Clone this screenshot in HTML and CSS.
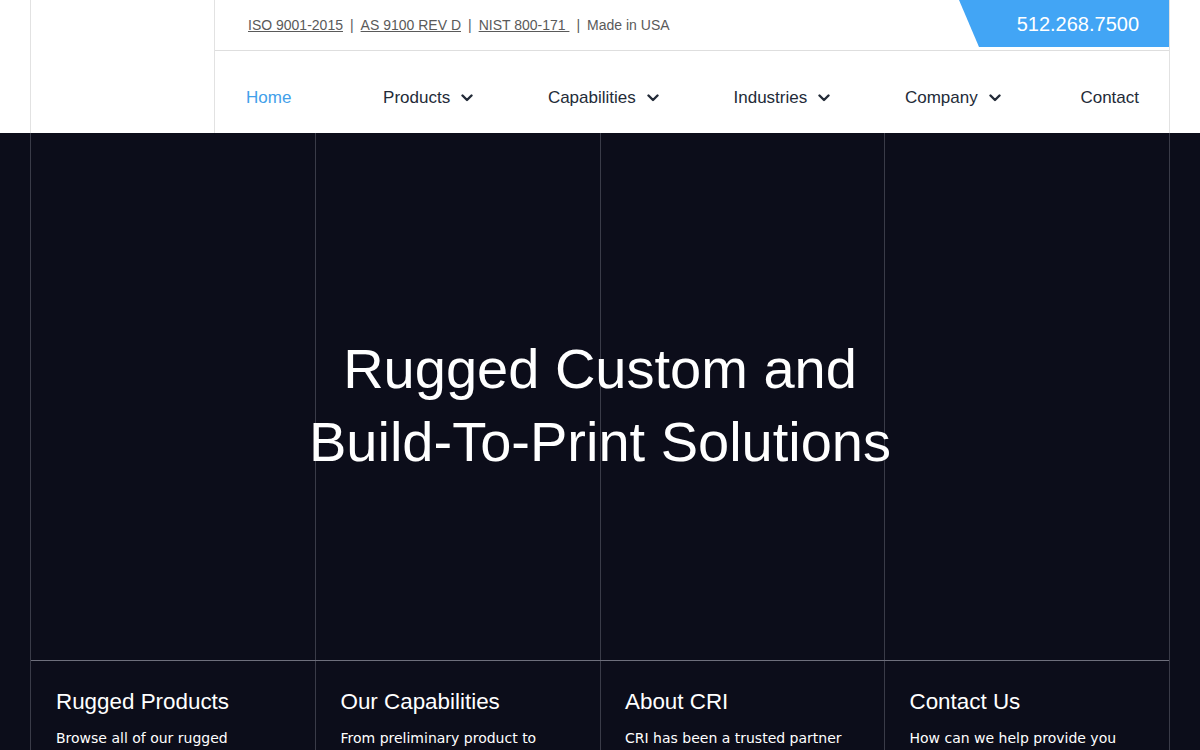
FILE: index.html
```html
<!DOCTYPE html>
<html><head>
<meta charset="utf-8">
<meta name="viewport" content="width=device-width, initial-scale=1.0">
<title>CRI - Rugged Custom and Build-To-Print Solutions</title>
<link rel="stylesheet" href="styles.css">
</head>
<body>
<header class="site-header">
  <div class="wrap head-row">
    <div class="logo"></div>
    <div class="head-main">
      <div class="topbar">
        <p class="certs">
          <a href="#">ISO 9001-2015</a><span class="sep">|</span><a href="#">AS 9100 REV D</a><span class="sep">|</span><a href="#">NIST 800-171 </a><span class="sep">|</span>Made in USA
        </p>
        <a class="phone" href="#">512.268.7500</a>
      </div>
      <nav class="nav">
        <a href="#" class="active">Home</a>
        <a href="#">Products <svg class="chev" viewBox="0 0 12 8"><path d="M1.5 1.5 6 6l4.5-4.5"/></svg></a>
        <a href="#">Capabilities <svg class="chev" viewBox="0 0 12 8"><path d="M1.5 1.5 6 6l4.5-4.5"/></svg></a>
        <a href="#">Industries <svg class="chev" viewBox="0 0 12 8"><path d="M1.5 1.5 6 6l4.5-4.5"/></svg></a>
        <a href="#">Company <svg class="chev" viewBox="0 0 12 8"><path d="M1.5 1.5 6 6l4.5-4.5"/></svg></a>
        <a href="#" class="last">Contact</a>
      </nav>
    </div>
  </div>
</header>

<section class="hero">
  <div class="wrap hero-grid">
    <h1 class="hero-title">Rugged Custom and<br>Build-To-Print Solutions</h1>
    <div class="cards">
      <div class="card">
        <h3>Rugged Products</h3>
        <p>Browse all of our rugged products and solutions.</p>
      </div>
      <div class="card">
        <h3>Our Capabilities</h3>
        <p>From preliminary product to final production.</p>
      </div>
      <div class="card">
        <h3>About CRI</h3>
        <p>CRI has been a trusted partner for decades.</p>
      </div>
      <div class="card">
        <h3>Contact Us</h3>
        <p>How can we help provide you a rugged solution?</p>
      </div>
    </div>
  </div>
</section>
</body>
</html>
```

FILE: styles.css
```css
html, body { margin: 0; padding: 0; }
body {
  font-family: "DejaVu Sans", sans-serif;
  background: #0c0d1a;
  overflow: hidden;
}
a { text-decoration: none; color: inherit; }

.wrap { width: 1140px; margin: 0 auto; box-sizing: border-box; }

/* header */
.site-header { background: #fff; }
.head-row { display: flex; height: 133px; }
.logo {
  width: 185px;
  border-left: 1px solid #e2e2e2;
  border-right: 1px solid #e2e2e2;
  box-sizing: border-box;
}
.head-main {
  flex: 1;
  border-right: 1px solid #e2e2e2;
  display: flex;
  flex-direction: column;
}
.topbar {
  height: 51px;
  box-sizing: border-box;
  border-bottom: 1px solid #dedede;
  display: flex;
  justify-content: space-between;
  align-items: flex-start;
}
.certs {
  margin: 0;
  padding: 17px 0 0 33px;
  font: 14px "Liberation Sans", Arial, sans-serif;
  color: #5a5a5a;
}
.certs a { text-decoration: underline; color: #5a5a5a; }
.sep { margin: 0 7px; }
.phone {
  height: 47px;
  width: 210px;
  box-sizing: border-box;
  background: #42a5f5;
  color: #fff;
  font: 20px "Liberation Sans", Arial, sans-serif;
  display: flex;
  align-items: center;
  justify-content: flex-end;
  padding: 2px 30px 0 0;
  clip-path: polygon(0 0, 100% 0, 100% 100%, 20px 100%);
}
.nav {
  flex: 1;
  display: flex;
  align-items: center;
  justify-content: space-between;
  padding: 12px 30px 0 31px;
  font: 17px "Liberation Sans", Arial, sans-serif;
  color: #232b38;
}
.nav a { display: flex; align-items: center; gap: 11px; }
.nav a.active { color: #42a0ea; margin-right: 17px; }
.nav a.last { margin-left: 5px; }
.chev {
  width: 12px; height: 8px;
  fill: none; stroke: #232b38; stroke-width: 2.4;
  stroke-linecap: round; stroke-linejoin: round;
}

/* hero */
.hero { height: 617px; }
.hero-grid {
  height: 100%;
  border-left: 1px solid #3a3b48;
  border-right: 1px solid #3a3b48;
  background-image:
    linear-gradient(#3a3b48, #3a3b48),
    linear-gradient(#3a3b48, #3a3b48),
    linear-gradient(#3a3b48, #3a3b48);
  background-size: 1px 100%;
  background-repeat: no-repeat;
  background-position: 284px 0, 569px 0, 853px 0;
  display: flex;
  flex-direction: column;
}
.hero-title {
  margin: 0;
  flex: 0 0 527px;
  box-sizing: border-box;
  padding-top: 199px;
  text-align: center;
  color: #fff;
  font: 400 56px/73px "Liberation Sans", Arial, sans-serif;
}
.cards {
  display: grid;
  grid-template-columns: repeat(4, 1fr);
  border-top: 1px solid #6e6f7c;
  flex: 1;
}
.card {
  padding: 28px 40px 0 25px;
  color: #fff;
}
.card h3 {
  margin: 0 0 12px;
  font: 400 22.4px/26px "Liberation Sans", Arial, sans-serif;
}
.card p {
  margin: 0;
  font-size: 14px;
  line-height: 22px;
}
```
